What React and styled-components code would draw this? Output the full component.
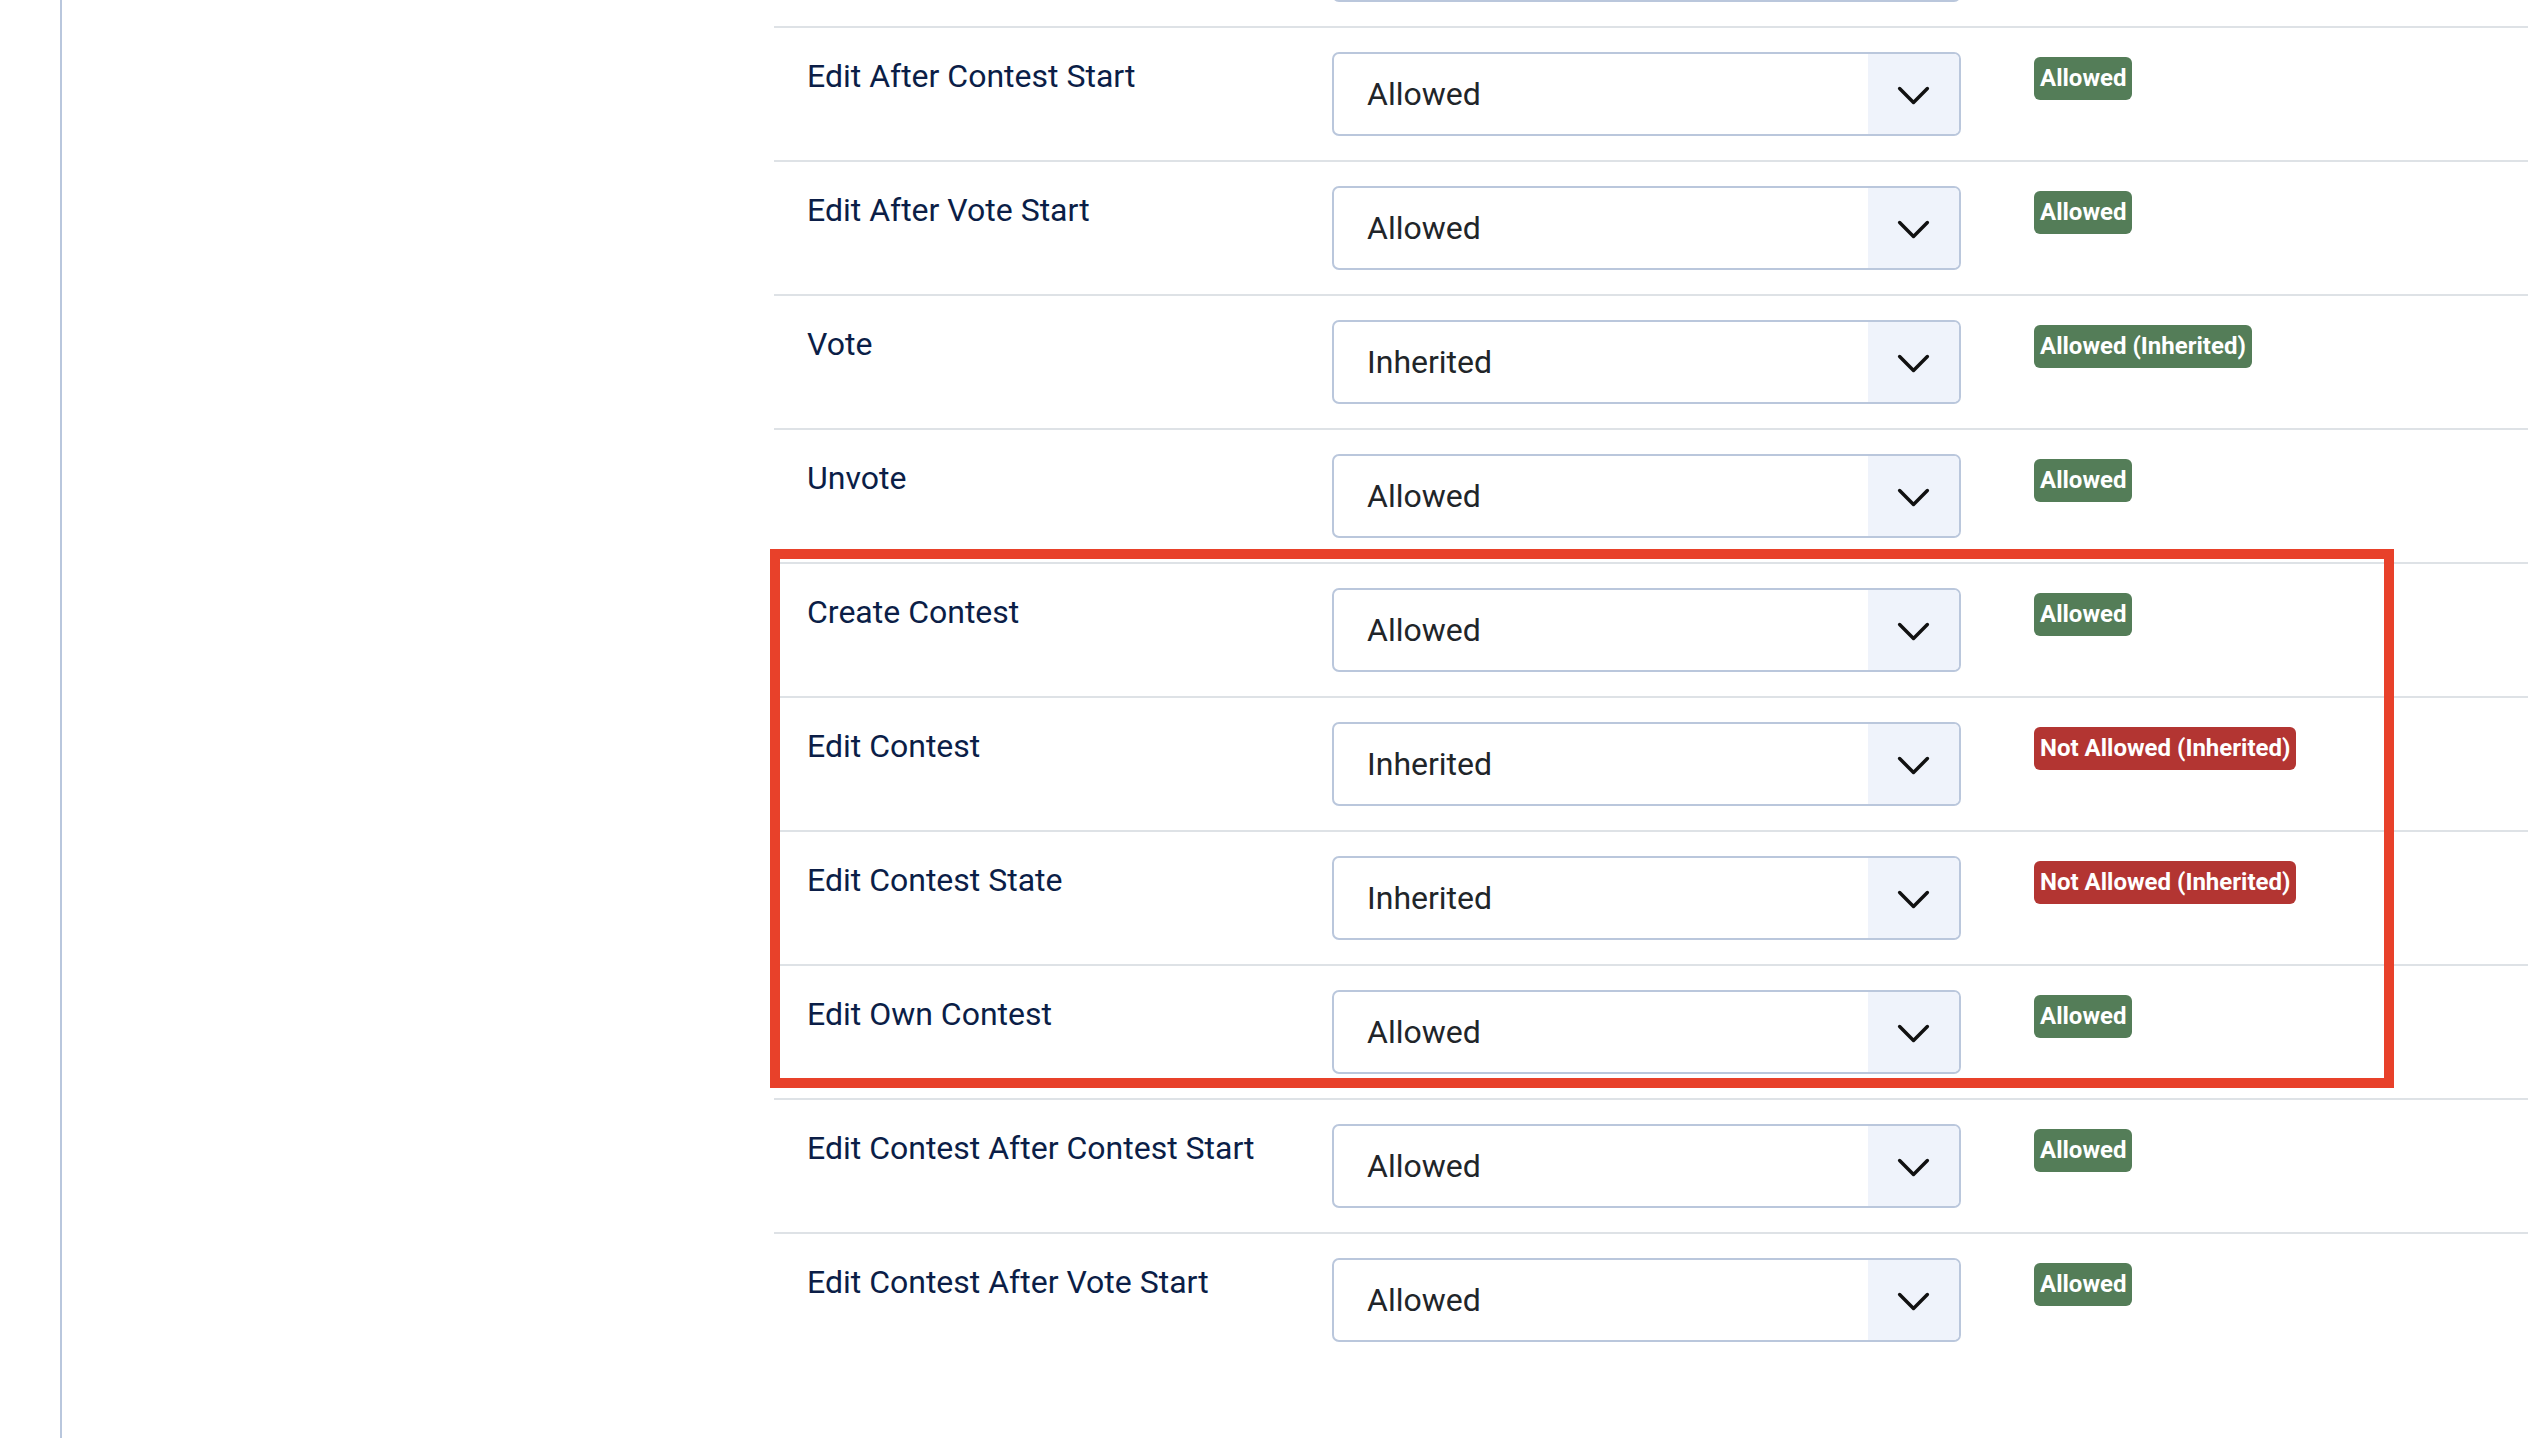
import React from "react";
import styled, { createGlobalStyle } from "styled-components";

const GlobalStyle = createGlobalStyle`
  html, body {
    margin: 0;
    padding: 0;
    height: 100%;
    background: #ffffff;
    overflow: hidden;
  }
  body {
    font-family: Roboto, "Liberation Sans", Arial, sans-serif;
  }
  #root {
    height: 100%;
  }
`;

const Page = styled.div`
  display: flex;
  height: 100%;
`;

const Sidebar = styled.aside`
  flex: 0 0 60px;
  border-right: 2px solid #b9c7dd;
`;

const Main = styled.main`
  flex: 1;
  padding: 0 18px 0 712px;
  overflow: hidden;
`;

const List = styled.div`
  display: flex;
  flex-direction: column;
  margin-top: -108px;
`;

const Highlight = styled.div`
  position: relative;
  display: flex;
  flex-direction: column;
`;

const HighlightFrame = styled.div`
  position: absolute;
  top: -13px;
  left: -4px;
  width: 1624px;
  height: 539px;
  box-sizing: border-box;
  border: 10px solid #e8412a;
  pointer-events: none;
`;

const Row = styled.div`
  display: grid;
  grid-template-columns: 525px 629px auto;
  align-items: start;
  padding: 24px 0 24px 33px;
  border-top: 2px solid ${(p) => (p.$first ? "transparent" : "#dee2e6")};
`;

const Label = styled.div`
  font-family: Roboto, "Liberation Sans", Arial, sans-serif;
  font-size: 32px;
  line-height: 48px;
  min-height: 48px;
  color: #0b1e47;
`;

const SelectBox = styled.div`
  display: flex;
  align-items: stretch;
  height: 84px;
  box-sizing: border-box;
  border: 2px solid #bac7dc;
  border-radius: 7px;
  overflow: hidden;
  background: #ffffff;
`;

const SelectValue = styled.div`
  flex: 1;
  display: flex;
  align-items: center;
  padding-left: 33px;
  font-family: Roboto, "Liberation Sans", Arial, sans-serif;
  font-size: 32px;
  color: #212529;
`;

const SelectToggle = styled.div`
  flex: 0 0 91px;
  display: flex;
  align-items: center;
  justify-content: center;
  background: #eff3fb;
  padding-top: 2px;
`;

const BadgeCell = styled.div`
  padding-left: 73px;
  padding-top: 5px;
`;

const Badge = styled.span`
  display: inline-block;
  font-family: Roboto, "Liberation Sans", Arial, sans-serif;
  font-weight: 700;
  font-size: 24px;
  line-height: 1;
  color: #ffffff;
  padding: 9px 6px 10px;
  border-radius: 6px;
  background: ${(p) => (p.$denied ? "#b33532" : "#547d58")};
  white-space: nowrap;
`;

const Chevron = () => (
  <svg width="37" height="37" viewBox="0 0 16 16" fill="none">
    <path
      d="M2 5l6 6 6-6"
      stroke="#111111"
      strokeWidth="1.5"
      strokeLinecap="round"
      strokeLinejoin="round"
    />
  </svg>
);

const PermissionRow = ({ label, value, status, first }) => (
  <Row $first={first}>
    <Label>{label}</Label>
    <SelectBox>
      <SelectValue>{value}</SelectValue>
      <SelectToggle>
        <Chevron />
      </SelectToggle>
    </SelectBox>
    <BadgeCell>
      {status && <Badge $denied={status.startsWith("Not")}>{status}</Badge>}
    </BadgeCell>
  </Row>
);

const before = [
  { label: "Edit After Contest Start", value: "Allowed", status: "Allowed" },
  { label: "Edit After Vote Start", value: "Allowed", status: "Allowed" },
  { label: "Vote", value: "Inherited", status: "Allowed (Inherited)" },
  { label: "Unvote", value: "Allowed", status: "Allowed" },
];

const highlighted = [
  { label: "Create Contest", value: "Allowed", status: "Allowed" },
  { label: "Edit Contest", value: "Inherited", status: "Not Allowed (Inherited)" },
  { label: "Edit Contest State", value: "Inherited", status: "Not Allowed (Inherited)" },
  { label: "Edit Own Contest", value: "Allowed", status: "Allowed" },
];

const after = [
  { label: "Edit Contest After Contest Start", value: "Allowed", status: "Allowed" },
  { label: "Edit Contest After Vote Start", value: "Allowed", status: "Allowed" },
];

export default function App() {
  return (
    <>
      <GlobalStyle />
      <Page>
        <Sidebar />
        <Main>
          <List>
            <PermissionRow first label="" value="" status="" />
            {before.map((r) => (
              <PermissionRow key={r.label} {...r} />
            ))}
            <Highlight>
              {highlighted.map((r) => (
                <PermissionRow key={r.label} {...r} />
              ))}
              <HighlightFrame />
            </Highlight>
            {after.map((r) => (
              <PermissionRow key={r.label} {...r} />
            ))}
          </List>
        </Main>
      </Page>
    </>
  );
}
